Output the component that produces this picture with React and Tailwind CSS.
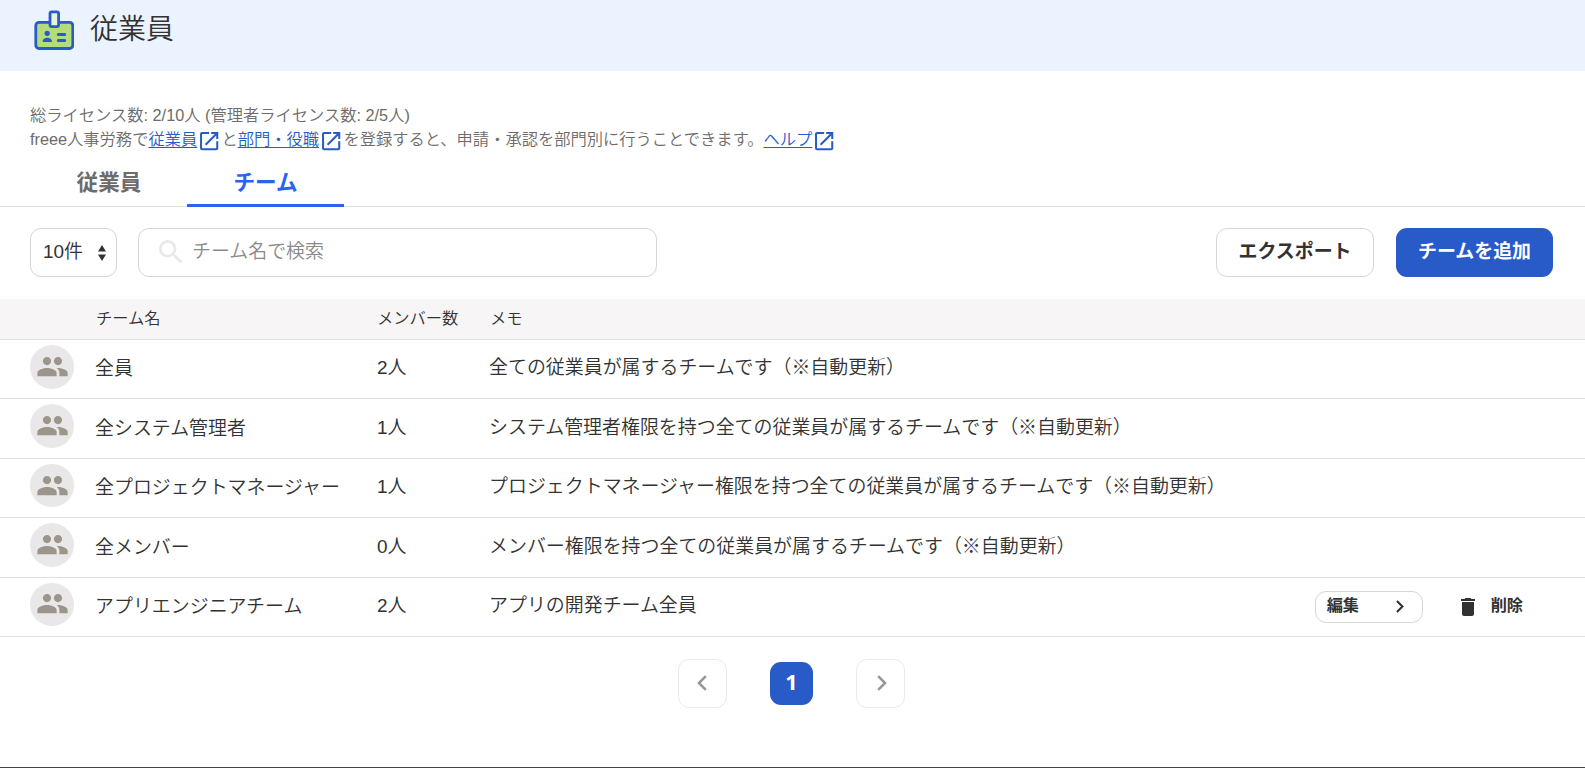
import React from 'react';
import { MdDelete, MdGroup, MdOpenInNew, MdSearch } from 'react-icons/md';

const teams = [
  { name: '全員', members: 2, memo: '全ての従業員が属するチームです（※自動更新）' },
  { name: '全システム管理者', members: 1, memo: 'システム管理者権限を持つ全ての従業員が属するチームです（※自動更新）' },
  { name: '全プロジェクトマネージャー', members: 1, memo: 'プロジェクトマネージャー権限を持つ全ての従業員が属するチームです（※自動更新）' },
  { name: '全メンバー', members: 0, memo: 'メンバー権限を持つ全ての従業員が属するチームです（※自動更新）' },
  { name: 'アプリエンジニアチーム', members: 2, memo: 'アプリの開発チーム全員', editable: true },
];

const BadgeIcon = () => (
  <svg className="w-10 h-10 shrink-0" viewBox="0 0 40 40" fill="none">
    <rect x="1.8" y="12.3" width="37" height="26.2" rx="3.2" fill="#b5dc7c" stroke="#285ac8" strokeWidth="2.8" />
    <rect x="16" y="1.8" width="8.6" height="14.8" rx="1.8" fill="#e9f2dc" stroke="#285ac8" strokeWidth="2.8" />
    <circle cx="13.2" cy="23.3" r="2.6" fill="#285ac8" />
    <path d="M8.7 32v-1c0-1.8 2.2-3.2 4.6-3.2s4.6 1.4 4.6 3.2v1z" fill="#285ac8" />
    <path d="M24.3 24.4h6.4M24.3 30.4h6.4" stroke="#285ac8" strokeWidth="3" strokeLinecap="round" />
  </svg>
);

const SortIcon = () => (
  <svg className="w-2 h-4" viewBox="0 0 8 16" fill="currentColor">
    <path d="M4 0l4 6.500H0zM4 16l4-6.500H0z" />
  </svg>
);

const ChevronRight = ({ className }) => (
  <svg className={className} viewBox="0 0 10 16" fill="none" stroke="currentColor" strokeWidth="2.6">
    <path d="M1.200 1.200L8 8l-6.800 6.800" />
  </svg>
);

const ExternalLink = ({ children }) => (
  <a href="#" className="inline-flex items-center text-[#285ac8]">
    <span className="underline underline-offset-2">{children}</span>
    <MdOpenInNew className="w-[24.3px] h-[24.3px] mt-1" />
  </a>
);

const TeamRow = ({ team }) => (
  <div className="flex h-[59.4px] border-b border-[#e1dfe0] pl-[30px] text-[18.94px] leading-[28px]">
    <div className="mt-[5px] w-11 h-[43.5px] rounded-full bg-[#e9e7e7] flex items-center justify-center">
      <MdGroup className="w-[33px] h-[33px] -mt-px text-[#9c958c]" />
    </div>
    <div className="w-[282px] ml-[21px] pt-[15.4px]">{team.name}</div>
    <div className="w-[113px] pt-[14.4px]">{team.members}人</div>
    <div className="flex-1 -ml-px pt-[14.4px]">{team.memo}</div>
    {team.editable && (
      <div className="flex items-start pt-[13px] pr-[62px] text-[16.2px] font-bold">
        <button className="flex items-center justify-between w-[108px] h-8 pl-[11px] pr-[18px] border border-[#d7d5d5] rounded-[11px]">
          <span className="-mt-[3px]">編集</span>
          <ChevronRight className="w-2 h-[13px]" />
        </button>
        <button className="flex items-center h-8 ml-[33px]">
          <MdDelete className="w-6 h-6" />
          <span className="ml-[11px] -mt-[3px]">削除</span>
        </button>
      </div>
    )}
  </div>
);

export default function App() {
  return (
    <div className="flex flex-col h-screen overflow-hidden bg-white text-[#323232] border-b border-[#464343] font-[350] font-['Liberation_Sans','Noto_Sans_CJK_JP',sans-serif]">
      <header className="flex h-[71px] shrink-0 items-start gap-4 bg-[#ebf3ff] pl-[34px] pt-[10px]">
        <BadgeIcon />
        <h1 className="text-[28px] leading-[39px] font-[350]">従業員</h1>
      </header>

      <div className="h-[82px] shrink-0 pl-[30px] pt-8 text-[16.27px] leading-[24.3px] text-[#6e6b6b]">
        <p>総ライセンス数: 2/10人 (管理者ライセンス数: 2/5人)</p>
        <p className="flex items-center h-[24px]">
          freee人事労務で<ExternalLink>従業員</ExternalLink>と<ExternalLink>部門・役職</ExternalLink>を登録すると、申請・承認を部門別に行うことできます。<ExternalLink>ヘルプ</ExternalLink>
        </p>
      </div>

      <nav className="flex h-[54px] shrink-0 border-b border-[#e1dfe0] pl-[30px] text-[21.6px] font-bold leading-[30px]">
        <button className="w-[157px] h-[54px] pt-[9px] pb-[3px] pl-px text-[#6e6b6b]">従業員</button>
        <button className="w-[157px] h-[54px] pt-[9px] border-b-3 border-[#2864f0] text-[#2864f0]">チーム</button>
      </nav>

      {/* 検索バー */}
      <div className="flex h-[92px] shrink-0 pl-[30px] pr-8 pt-[21px] text-[18.94px]">
        <button className="flex items-center justify-between w-[87px] h-[49px] pl-3 pr-[10px] border border-[#d7d5d5] rounded-[11px]">
          <span className="-mt-px">10件</span>
          <SortIcon />
        </button>
        <div className="flex items-center w-[519px] h-[49px] ml-[21px] pl-4 border border-[#d7d5d5] rounded-[11px]">
          <MdSearch className="w-8 h-8 -mt-0.5 text-[#e9e7e7]" />
          <span className="ml-[5px] -mt-px text-[#8c8989]">チーム名で検索</span>
        </div>
        <button className="ml-auto w-[158px] h-[49px] pb-px border border-[#d7d5d5] rounded-[11px] font-bold">エクスポート</button>
        <button className="ml-[22px] w-[157px] h-[49px] pb-px rounded-[11px] bg-[#285ac8] text-white font-bold">チームを追加</button>
      </div>

      {/* チーム一覧 */}
      <div className="flex h-[41px] shrink-0 border-b border-[#e1dfe0] bg-[#f7f5f6] pl-24 pt-[7px] text-[16.27px] leading-[24px]">
        <div className="w-[281px]">チーム名</div>
        <div className="w-[113px]">メンバー数</div>
        <div>メモ</div>
      </div>
      {teams.map((team) => (
        <TeamRow key={team.name} team={team} />
      ))}

      {/* ページネーション */}
      <div className="flex items-center justify-center gap-[43px] pt-[22px] pr-[2px]">
        <button className="flex items-center justify-center w-[49px] h-[49px] pr-0.5 pb-px border border-[#ebebeb] rounded-[11px] text-[#999797]">
          <ChevronRight className="w-[10px] h-4 rotate-180" />
        </button>
        <button className="w-[43px] h-[43px] pb-[3px] rounded-[11px] bg-[#285ac8] text-white text-[21.6px] font-bold font-['Noto_Sans',sans-serif]">1</button>
        <button className="flex items-center justify-center w-[49px] h-[49px] pl-0.5 pb-px border border-[#ebebeb] rounded-[11px] text-[#999797]">
          <ChevronRight className="w-[10px] h-4" />
        </button>
      </div>
    </div>
  );
}
